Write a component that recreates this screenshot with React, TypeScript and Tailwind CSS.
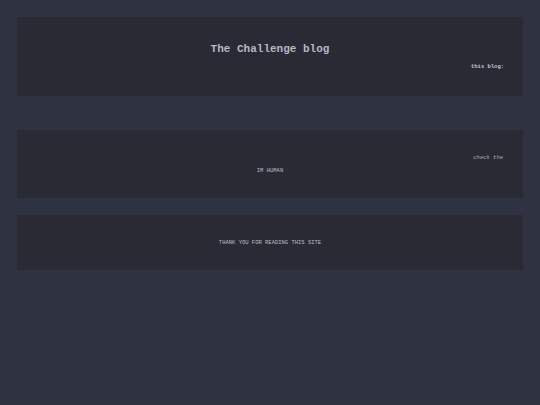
export default function App() {
  return (
    <div className="min-h-screen w-full bg-[#2f3240] px-[17px] pt-[17px] font-['Liberation_Mono',monospace]">
      <header className="flex h-[79px] flex-col bg-[#292a34] pt-[26px]">
        <h1 className="text-center text-[11px] leading-[12px] font-bold text-[#b4b8c7]">The Challenge blog</h1>
        <p className="mt-[9px] pr-[19px] text-right text-[5.5px] leading-[6px] font-bold text-[#c4c8d4]">this blog:</p>
      </header>

      <section className="mt-[34px] flex h-[68px] flex-col bg-[#292a34] pt-[25px]">
        <p className="pr-[20px] text-right text-[5.5px] leading-[6px] italic text-[#a9adbb]">check the</p>
        <p className="mt-[7px] text-center text-[5.5px] leading-[6px] text-[#b9bdc9]">IM HUMAN</p>
      </section>

      <footer className="mt-[17px] flex h-[55px] items-center justify-center bg-[#292a34]">
        <p className="text-[5.5px] leading-[6px] text-[#b9bdc9]">THANK YOU FOR READING THIS SITE</p>
      </footer>
    </div>
  );
}
